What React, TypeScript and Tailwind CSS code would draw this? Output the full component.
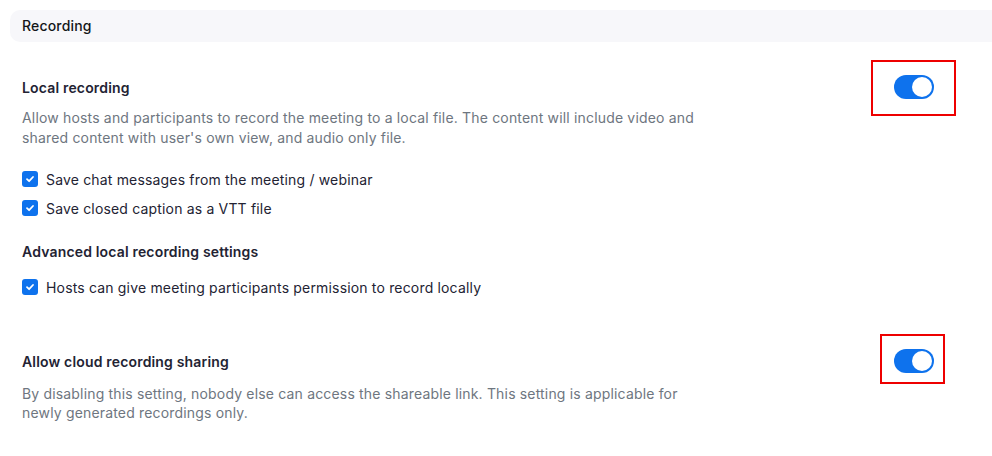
import React from "react";

const Toggle: React.FC<{ box: string }> = ({ box }) => (
  <span className="relative inline-flex">
    <span className="flex h-6 w-10 items-center justify-end rounded-full bg-[#0e72ed] pr-[2px]">
      <span className="h-5 w-5 rounded-full bg-white" />
    </span>
    <span className={`pointer-events-none absolute border-2 border-[#ee0000] ${box}`} />
  </span>
);

const Check: React.FC<{ label: string; className?: string }> = ({ label, className }) => (
  <div className={`flex h-5 items-center gap-2 ${className ?? ""}`}>
    <span className="flex h-4 w-4 items-center justify-center rounded-[3px] bg-[#0e72ed]">
      <svg width="10" height="10" viewBox="0 0 10 10" fill="none">
        <path d="M2 5.2 L4.1 7.2 L8 3" stroke="white" strokeWidth="1.8" strokeLinecap="round" strokeLinejoin="round" />
      </svg>
    </span>
    <span className="text-[14px] text-[#232333]">{label}</span>
  </div>
);

export default function App() {
  return (
    <div
      className="h-[456px] w-[992px] overflow-hidden bg-white pl-[10px] pt-[10px] tracking-[0.17px]"
      style={{ fontFamily: "Inter, 'Noto Sans', sans-serif" }}
    >
      <div className="flex h-8 items-center rounded-l-[10px] bg-[#f7f7fa] pl-3">
        <span className="-mt-px text-[14px] font-medium text-[#131619]">Recording</span>
      </div>

      <div className="pl-3 pr-[58px] pt-[33px]">
        <div className="flex h-6 items-center justify-between">
          <span className="text-[14px] font-semibold text-[#232333]">Local recording</span>
          <Toggle box="-left-[23px] -top-[15px] h-[56px] w-[85px]" />
        </div>
        <p className="mt-[9px] max-w-[680px] text-[14px] leading-5 text-[#6e7680]">
          Allow hosts and participants to record the meeting to a local file. The content will include video and shared
          content with user's own view, and audio only file.
        </p>
        <Check className="mt-[21px]" label="Save chat messages from the meeting / webinar" />
        <Check className="mt-[9px]" label="Save closed caption as a VTT file" />
        <div className="mt-[24px] text-[14px] font-semibold leading-5 text-[#232333]">
          Advanced local recording settings
        </div>
        <Check className="mt-[15px]" label="Hosts can give meeting participants permission to record locally" />

        <div className="mt-[52px] flex h-6 items-center justify-between">
          <span className="text-[14px] font-semibold text-[#232333]">Allow cloud recording sharing</span>
          <Toggle box="-left-[14px] -top-[15px] h-[50px] w-[65px]" />
        </div>
        <p className="mt-[11px] max-w-[680px] text-[14px] leading-[19px] text-[#6e7680]">
          By disabling this setting, nobody else can access the shareable link. This setting is applicable for newly
          generated recordings only.
        </p>
      </div>
    </div>
  );
}
